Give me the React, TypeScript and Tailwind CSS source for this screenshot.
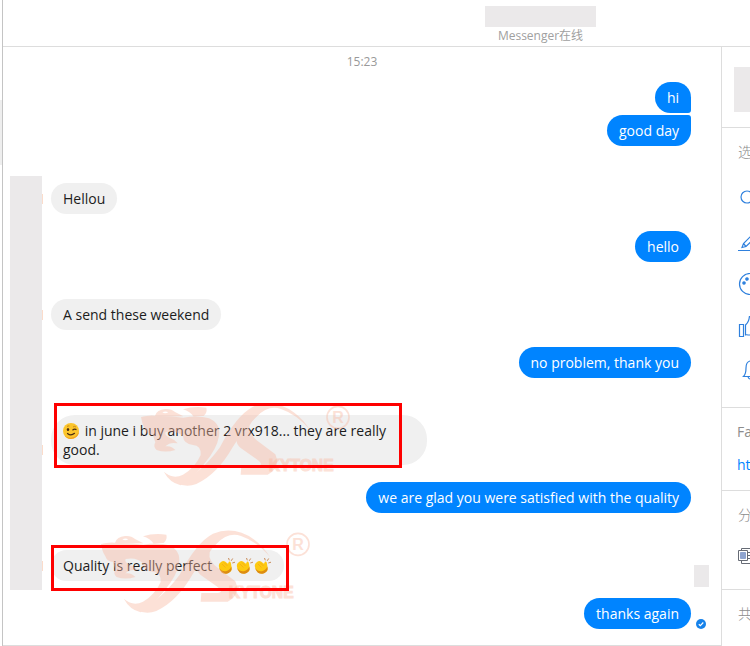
import React from 'react';

interface Message {
  id: number;
  text: string;
  mine: boolean;
  gap: string;
  shape?: string;
  before?: React.ReactNode;
  after?: React.ReactNode;
  mark?: string;
  logo?: string;
}

const WinkIcon = () => (
  <svg viewBox="0 0 16 16" className="mr-0.5 inline-block h-4 w-4 align-[-3px]" role="img" aria-label="wink">
    <circle cx="8" cy="8" r="8" fill="#fbc52c" />
    <path d="M1.5 12.5A8 8 0 0 0 16 8 9 9 0 0 1 1.500 12.500Z" fill="#f0a01e" />
    <ellipse cx="5" cy="6.500" rx="1.200" ry="1.500" fill="#4a2c10" />
    <path d="M9.500 7.200q1.800-1.600 4-.6" fill="none" stroke="#4a2c10" strokeWidth="1.200" />
    <path d="M4 3.500q1-.9 2.400-.5M10 4q1.500-1.200 3 0" fill="none" stroke="#c27a12" strokeWidth=".8" />
    <path d="M4.500 10.500q3.500 2.800 7-.2" fill="none" stroke="#4a2c10" strokeWidth="1.200" strokeLinecap="round" />
  </svg>
);

const ClapIcon = () => (
  <svg viewBox="0 0 18 18" className="inline-block h-[18px] w-[18px] align-[-4px]" role="img" aria-label="clap">
    <path d="M.8 9Q.6 6.500 3 5q2-1.600 4-.6l3 2.400 1-2.300q1.800-.2 2 2l.6 4.500q.4 3-2.600 4.600-4.500 2-7.500-.6Q1 12.500.8 9Z" fill="#fdc910" />
    <path d="M1.200 11Q4 15 8 14.200q4-1 5.300-4.700 1.200 4.500-2.600 6.500-4 1.900-7-.5-2-1.800-2.500-4.500Z" fill="#dd8d12" />
    <path d="M4 7l3.500 3.500M6 5.500L9.500 9" stroke="#f3ad17" strokeWidth=".9" />
    <path d="M11.300 3.300L10.500 1M13.200 3.800l1.500-2.300M14.300 6l2.700-.8" stroke="#c98c5a" strokeWidth="1" />
  </svg>
);

const SkytoneLogo = ({ className }: { className: string }) => (
  <svg
    viewBox="15 9 636 270"
    className={`pointer-events-none absolute h-[90px] w-[212px] ${className}`}
    fill="#f9b9a2"
    aria-hidden="true"
  >
    <g opacity=".42">
      <path d="M60 62Q66 44 90 42Q108 40 120 51L145 64L20 66Q40 60 60 62ZM82 52q8 6 18 0q-8-5-18 0Z" fillRule="evenodd" />
      <path d="M144 43Q175 33 214 38Q218 52 206 63Q190 62 176 65Q166 50 144 43Z" />
      <path d="M18 66Q85 59 145 68Q190 60 222 70Q258 86 252 123Q246 162 208 206Q172 253 137 271Q104 263 87 231Q114 254 144 239Q180 219 197 180Q199 151 174 150Q146 147 144 124Q124 104 92 111Q87 120 104 128Q119 133 128 145Q105 140 91 154Q109 151 121 165Q91 174 65 165Q53 155 61 142L53 119Q38 121 31 103Q25 94 22 84Z" />
      <path d="M87 231Q126 266 177 238Q219 206 254 158Q304 61 354 35Q418 10 478 53Q505 73 526 106Q486 58 438 42Q399 29 364 66Q330 96 293 157Q246 239 184 267Q131 286 87 231Z" />
      <path d="M412 33Q368 47 344 91Q338 117 373 142L421 178Q438 219 398 239H317L319 213H369Q388 210 367 194L316 158Q292 136 315 100Q345 42 412 33Z" />
    </g>
    <text
      x="401"
      y="228"
      fontSize="47"
      fontWeight="700"
      fontFamily="'Liberation Sans', sans-serif"
      stroke="#f9b9a2"
      strokeWidth="3"
      opacity=".42"
    >
      KYTONE
    </text>
    <g opacity=".42">
      <circle cx="609" cy="67" r="33" fill="none" stroke="#f9b9a2" strokeWidth="5" />
      <text x="609" y="84" fontSize="48" fontWeight="700" textAnchor="middle" fontFamily="'Liberation Sans', sans-serif">
        R
      </text>
    </g>
  </svg>
);

const SentIcon = () => (
  <svg viewBox="0 0 10 10" className="h-2.5 w-2.5 shrink-0" role="img" aria-label="sent">
    <circle cx="5" cy="5" r="5" fill="#1682ea" />
    <path d="M2.800 5.200l1.500 1.400L7.300 3.500" fill="none" stroke="#fff" strokeWidth="1.200" />
  </svg>
);

const opening: Message[] = [
  { id: 1, text: 'hi', mine: true, gap: '', shape: 'rounded-2xl rounded-br-[3px]' },
  { id: 2, text: 'good day', mine: true, gap: 'mt-0.5', shape: 'rounded-2xl rounded-tr-[3px]' },
];

const thread: Message[] = [
  { id: 3, text: 'Hellou', mine: false, gap: '' },
  { id: 4, text: 'hello', mine: true, gap: 'mt-[17px]' },
  { id: 5, text: 'A send these weekend', mine: false, gap: 'mt-[37px]' },
  { id: 6, text: 'no problem, thank you', mine: true, gap: 'mt-[17px]' },
  {
    id: 7,
    text: ' in june i buy another 2 vrx918... they are really good.',
    mine: false,
    gap: 'mt-[37px]',
    shape: 'rounded-3xl',
    before: <WinkIcon />,
    mark: '-top-3 left-[3px] h-[65px] w-[348px]',
    logo: '-top-[17px] left-[89px]',
  },
  { id: 8, text: 'we are glad you were satisfied with the quality', mine: true, gap: 'mt-[17px]' },
  {
    id: 9,
    text: 'Quality is really perfect ',
    mine: false,
    gap: 'mt-[37px]',
    after: (
      <span className="ml-0.5">
        <ClapIcon />
        <ClapIcon />
        <ClapIcon />
      </span>
    ),
    mark: '-top-[5px] left-0 h-[46px] w-[238px]',
    logo: '-top-[25px] left-[49px]',
  },
];

const Bubble = ({ message }: { message: Message }) => {
  const { text, mine, gap, shape = 'rounded-2xl', before, after, mark, logo } = message;
  return (
    <li className={`relative flex ${gap} ${mine ? 'justify-end' : 'justify-start'}`}>
      {!mine && <span className="absolute bottom-2.5 -left-[9px] h-2.5 w-px bg-[#fbdccb]" />}
      <p
        className={`max-w-[376px] px-3 py-1.5 text-[14px] leading-[19px] ${shape} ${
          mine ? 'bg-[#0084ff] text-white' : 'bg-[#f0f0f0] text-[#1c1c1c]'
        }`}
      >
        {before}
        {text}
        {after}
      </p>
      {logo && <SkytoneLogo className={logo} />}
      {mark && <span className={`absolute border-3 border-[#fe0000] ${mark}`} />}
    </li>
  );
};

const actions = [
  {
    label: 'Search',
    height: 'h-[46px]',
    art: <circle cx="8" cy="11" r="6" />,
  },
  {
    label: 'Edit',
    height: 'h-[43px]',
    art: <path d="M-1 19.500H22M3 16.500l1.500-4L14 3l3 3L7 15.500 3 16.500ZM4.500 12.500L7 15.500" />,
  },
  {
    label: 'Color',
    height: 'h-[42px]',
    art: (
      <>
        <circle cx="11" cy="11" r="10.500" />
        <circle cx="8" cy="6" r="1.200" fill="currentColor" />
        <circle cx="5" cy="10" r="1.200" fill="currentColor" />
      </>
    ),
  },
  {
    label: 'Like',
    height: 'h-[44px]',
    art: <path d="M.5 8.500h4v12h-4zM6.500 19.500V9Q10 6 10.500 0q3-1 3 3v5h7v11H9l-2.500-.5" />,
  },
  {
    label: 'Notifications',
    height: 'h-[43px]',
    art: <path d="M11 1Q7 2 7 8t-2.500 8.500H18Q15 14 15 8T11 1ZM9 17q2 4 4 0" />,
  },
];

const Sidebar = () => (
  <aside className="w-[29px] shrink-0 overflow-hidden border-l border-[#dddddd] text-[14px] leading-5 whitespace-nowrap text-[#8d8d8d]">
    <div className="h-[81px] border-b border-[#dddddd] pt-5 pl-3">
      <div className="h-[45px] w-12 bg-[#ebe9ea]" />
    </div>
    <section className="h-[280px] border-b border-[#dddddd] pt-[14px] pl-4">
      <h2 className="font-light">选</h2>
      <div className="pt-3">
        {actions.map((action) => (
          <button
            key={action.label}
            aria-label={action.label}
            className={`flex w-8 items-center text-[#2f80dd] ${action.height}`}
          >
            <svg
              viewBox="-1 0 23 22"
              className="h-[22px] w-[23px] shrink-0"
              fill="none"
              stroke="currentColor"
              strokeWidth="1.200"
            >
              {action.art}
            </svg>
          </button>
        ))}
      </div>
    </section>
    <section className="h-[83px] border-b border-[#dddddd] pt-[14px] pl-[15px]">
      <h2>Fa</h2>
      <a href="#" className="mt-[13px] block text-[#0084ff]">
        ht
      </a>
    </section>
    <section className="h-[99px] border-b border-[#dddddd] pt-[14px] pl-4">
      <h2 className="font-light">分</h2>
      <svg viewBox="0 0 20 16" className="mt-[23px] h-4 w-5" fill="#fff" stroke="#666b75">
        <path d="M3.500.5h16v15h-16z" />
        <path d="M10 4.500h9M10 7.500h9M10 10.500h9" />
        <path d="M.5 2.500h9v10h-9z" />
        <path d="M2.500 4.500h5v6h-5z" fill="#8ea4cf" stroke="#8ea4cf" />
      </svg>
    </section>
    <section className="pt-[14px] pl-4">
      <h2 className="font-light">共</h2>
    </section>
  </aside>
);

export default function App() {
  return (
    <div className="flex min-h-screen overflow-hidden bg-white font-['Open_Sans','Noto_Sans_CJK_SC',sans-serif]">
      <div className="w-0.5 shrink-0 pt-[100px]">
        <div className="h-[65px] bg-[#eeeeee]" />
      </div>
      <div className="flex min-w-0 flex-1 flex-col border-l border-[#c4c4c4]">
        <header className="flex h-[47px] flex-col items-center border-b border-[#dddddd] pt-1.5 pl-[328px]">
          <div className="h-[21px] w-[111px] bg-[#ebe9ea]" />
          <span className="text-[12px] leading-[18px] text-[#a0a0a0]">Messenger在线</span>
        </header>
        <div className="flex flex-1">
          <main className="min-w-0 flex-1 border-b border-[#dddddd] pb-4">
            <time className="block pt-1.5 text-center text-[12px] leading-[18px] text-[#999999]">15:23</time>
            <ul className="pt-[11px] pr-[30px]">
              {opening.map((message) => (
                <Bubble key={message.id} message={message} />
              ))}
            </ul>
            <div className="mt-[30px] flex gap-[9px] pr-[30px] pl-[7px]">
              <div className="w-8 shrink-0 bg-[#ebe9ea]" />
              <ul className="min-w-0 flex-1 pt-[7px] pb-[9px]">
                {thread.map((message) => (
                  <Bubble key={message.id} message={message} />
                ))}
              </ul>
            </div>
            <div className="relative mt-2 flex items-end justify-end gap-[5px] pr-[15px]">
              <span className="absolute -top-[33px] right-3 h-[22px] w-[15px] bg-[#ebe9ea]" />
              <p className="rounded-2xl bg-[#0084ff] px-3 py-1.5 text-[14px] leading-[19px] text-white">thanks again</p>
              <SentIcon />
            </div>
          </main>
          <Sidebar />
        </div>
      </div>
    </div>
  );
}
